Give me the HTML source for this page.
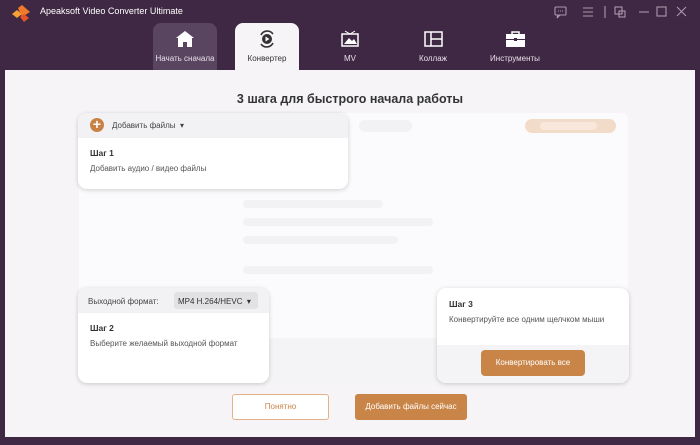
<!DOCTYPE html>
<html><head><meta charset="utf-8"><style>
*{margin:0;padding:0;box-sizing:border-box}
body{width:700px;height:445px;background:#3f2843;font-family:"Liberation Sans","Noto Sans CJK SC",sans-serif;position:relative;overflow:hidden;font-size:8px;color:#333}
.a{position:absolute}
.title{left:40px;top:6px;color:#fff;font-size:9px}
.tab{top:23px;width:64px;height:47px;border-radius:8px 8px 0 0;text-align:center;color:#e8e0ea;font-size:8px}
.tab span{position:absolute;left:0;right:0;top:31px}
.main{left:5px;top:70px;width:690px;height:367px;background:#f6f4f7}
.panel{left:79px;top:113px;width:549px;height:272px;background:#fbfafc;border-radius:6px}
.card{background:#fff;border-radius:9px;box-shadow:0 1px 5px rgba(0,0,0,.18);overflow:hidden}
.bar{background:#f2f1f3;border-radius:5px}
.btn{border-radius:3px;text-align:center;font-size:8px}
</style></head><body>
<svg class="a" style="left:10px;top:5px" width="22" height="18" viewBox="0 0 22 18"><path d="M2 9 L7 5 L12 9 L7 13Z" fill="#f6a038"/><path d="M8 3 L12 0 L20 7 L12 12 Z" fill="#f07a2a"/><path d="M10 12 L14 9 L19 13 L14 17Z" fill="#e5532a"/></svg>
<div class="a title">Apeaksoft Video Converter Ultimate</div>
<svg class="a" style="left:554px;top:5px" width="140" height="14" viewBox="0 0 140 14" fill="none" stroke="#a99aac" stroke-width="1.1"><rect x="1" y="2" width="11" height="8" rx="1"/><path d="M4 6h1M6 6h1M8 6h1M4 10l-1 3 3-3"/><path d="M29 3h10M29 7h10M29 11h10"/><path d="M51 1v12"/><rect x="61" y="2" width="7" height="7"/><rect x="65" y="6" width="6" height="6"/><path d="M85 7h10"/><rect x="103" y="2" width="9" height="9"/><path d="M123 2l9 9M132 2l-9 9"/></svg>
<div class="a tab" style="left:153px;width:64px;background:#5a4560"><svg class="a" style="left:23px;top:8px" width="18" height="16" viewBox="0 0 18 16"><path d="M9 0L0 7h2v9h5v-5h4v5h5V7h2Z" fill="#fff"/></svg><span>Начать сначала</span></div>
<div class="a tab" style="left:235px;width:64px;background:#f6f4f7;color:#333"><svg class="a" style="left:22px;top:6px" width="20" height="20" viewBox="0 0 20 20"><path d="M4 6a7 7 0 0 1 12-1M16 14a7 7 0 0 1-12 1" stroke="#333" stroke-width="1.6" fill="none"/><circle cx="10" cy="10" r="5" fill="#333"/><path d="M8.5 7.5v5l4-2.5z" fill="#fff"/></svg><span>Конвертер</span></div>
<div class="a tab" style="left:318px"><svg class="a" style="left:23px;top:7px" width="18" height="17" viewBox="0 0 18 17"><rect x="1" y="4" width="16" height="12" stroke="#fff" stroke-width="1.5" fill="none"/><path d="M4 1l5 3 5-3" stroke="#fff" fill="none"/><path d="M3 14l5-6 3 3 2-2 3 5z" fill="#fff"/></svg><span>MV</span></div>
<div class="a tab" style="left:401px"><svg class="a" style="left:23px;top:8px" width="19" height="16" viewBox="0 0 19 16"><rect x="1" y="1" width="17" height="14" stroke="#fff" stroke-width="1.5" fill="none"/><path d="M7 1v14M7 8h11" stroke="#fff" stroke-width="1.5"/></svg><span>Коллаж</span></div>
<div class="a tab" style="left:483px"><svg class="a" style="left:23px;top:8px" width="19" height="16" viewBox="0 0 19 16"><path d="M6 3V1h7v2" stroke="#fff" stroke-width="1.5" fill="none"/><rect x="0" y="3" width="19" height="5" fill="#fff"/><rect x="0" y="9" width="19" height="7" fill="#fff"/><rect x="8" y="7" width="3" height="3" fill="#3f2843"/></svg><span>Инструменты</span></div>
<div class="a main"></div>
<div class="a" style="left:0;top:92px;width:700px;text-align:center;font-size:12.5px;font-weight:bold;color:#333">3 шага для быстрого начала работы</div>
<div class="a panel"></div>
<div class="a bar" style="left:359px;top:120px;width:53px;height:12px;border-radius:6px"></div>
<div class="a" style="left:525px;top:119px;width:91px;height:14px;border-radius:7px;background:#f2dcc9"></div>
<div class="a" style="left:540px;top:122px;width:57px;height:8px;border-radius:4px;background:#f8e7da"></div>
<div class="a bar" style="left:243px;top:200px;width:140px;height:8px"></div>
<div class="a bar" style="left:243px;top:218px;width:190px;height:8px"></div>
<div class="a bar" style="left:243px;top:236px;width:155px;height:8px"></div>
<div class="a bar" style="left:243px;top:266px;width:190px;height:8px"></div>
<div class="a" style="left:79px;top:338px;width:549px;height:47px;background:#f4f3f5"></div>
<div class="a card" style="left:78px;top:113px;width:270px;height:76px">
<div style="height:25px;background:#f2f1f3;position:relative"><div class="a" style="left:12px;top:5px;width:14px;height:14px;border-radius:50%;background:#c98245;color:#fff;font-size:14px;line-height:13px;text-align:center;font-weight:bold">+</div><div class="a" style="left:34px;top:8px;color:#444">Добавить файлы&nbsp; ▾</div></div>
<div style="padding:10px 0 0 12px"><b style="font-size:8.5px">Шаг 1</b><div style="margin-top:6px;color:#555">Добавить аудио / видео файлы</div></div></div>
<div class="a card" style="left:78px;top:288px;width:191px;height:95px">
<div style="height:25px;background:#f2f1f3;position:relative"><div class="a" style="left:10px;top:9px;color:#444">Выходной формат:</div><div class="a" style="left:96px;top:4px;width:84px;height:17px;background:#e2e1e3;border-radius:3px;padding:5px 0 0 4px;color:#333">MP4 H.264/HEVC&nbsp; ▾</div></div>
<div style="padding:10px 0 0 12px"><b style="font-size:8.5px">Шаг 2</b><div style="margin-top:6px;color:#555">Выберите желаемый выходной формат</div></div></div>
<div class="a card" style="left:437px;top:288px;width:192px;height:95px;background:#fff">
<div style="height:57px;padding:11px 0 0 12px"><b style="font-size:8.5px">Шаг 3</b><div style="margin-top:6px;color:#555">Конвертируйте все одним щелчком мыши</div></div>
<div style="height:38px;background:#f4f3f5;position:relative"><div class="a btn" style="left:44px;top:5px;width:104px;height:26px;background:#c98548;color:#fff;line-height:26px;border-radius:4px">Конвертировать все</div></div></div>
<div class="a btn" style="left:232px;top:394px;width:97px;height:26px;border:1px solid #e3b28b;background:#fff;color:#c98548;line-height:24px">Понятно</div>
<div class="a btn" style="left:355px;top:394px;width:112px;height:26px;background:#c98548;color:#fff;line-height:26px">Добавить файлы сейчас</div>
</body></html>
